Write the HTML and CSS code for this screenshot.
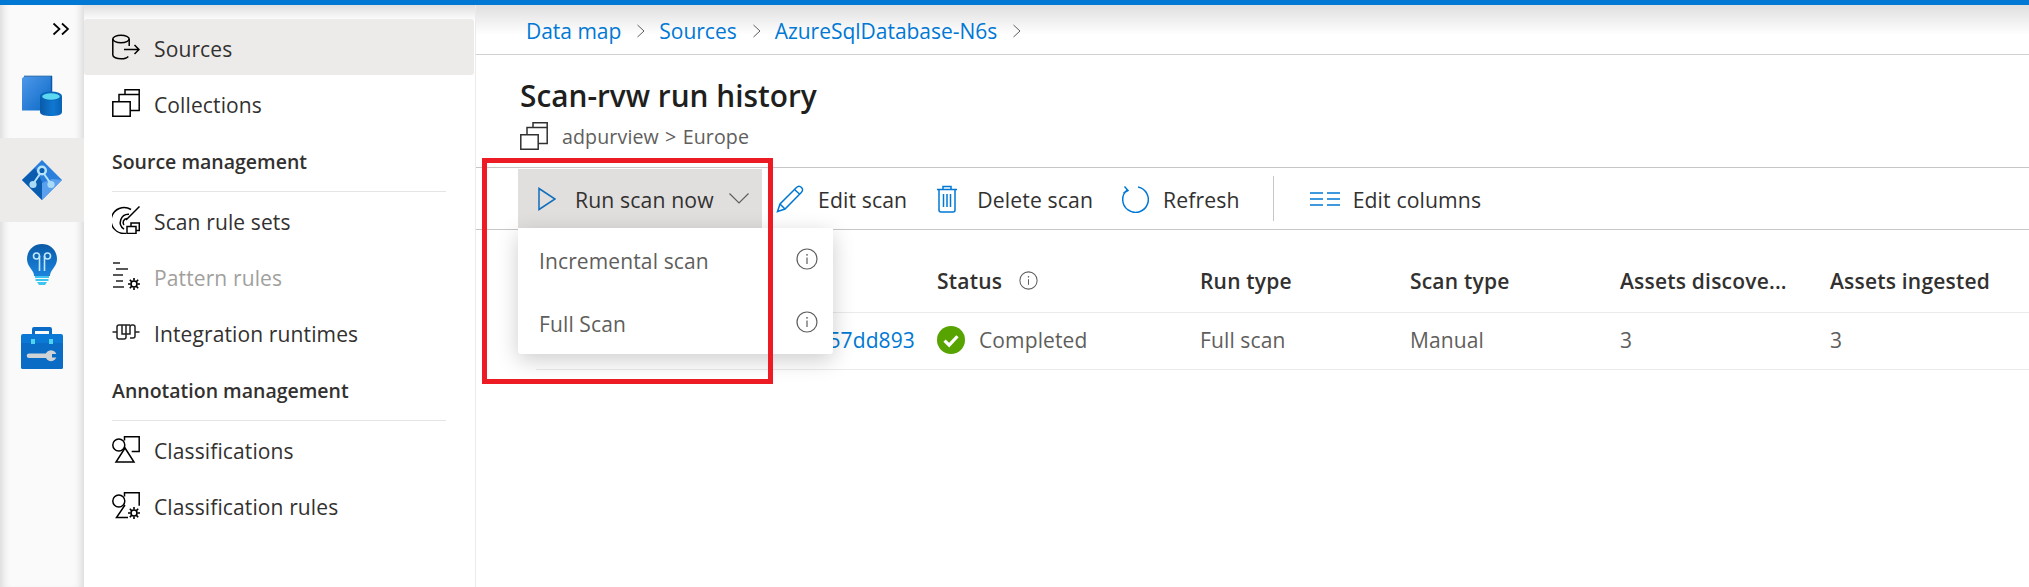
FILE: index.html
```html
<!DOCTYPE html>
<html lang="en">
<head>
<meta charset="utf-8">
<title>Scan-rvw run history</title>
<link rel="stylesheet" href="styles.css">
</head>
<body>
<svg class="defs" width="0" height="0" aria-hidden="true">
  <defs>
    <symbol id="i-collections" viewBox="0 0 28 28">
      <path d="M.8 12.800h17.400v14.400H.8zM7 12.800V5.500h20.200v16H18.200M13 5.500V.8h14.200v4.700" fill="none" stroke="currentColor" stroke-width="1.500"/>
    </symbol>
    <symbol id="i-info" viewBox="0 0 22 22">
      <circle cx="11" cy="11" r="10" fill="none" stroke="currentColor" stroke-width="1.200"/>
      <path d="M11 9.500V16" stroke="currentColor" stroke-width="1.200"/>
      <circle cx="11" cy="6.800" r=".9" fill="currentColor"/>
    </symbol>
    <symbol id="i-gear" viewBox="0 0 12 12">
      <circle cx="6" cy="6" r="3" fill="none" stroke="currentColor" stroke-width="1.600"/>
      <path d="M6 0v2.500M6 9.500V12M0 6h2.500M9.500 6H12M1.800 1.800l1.800 1.800M8.400 8.400l1.800 1.800M10.200 1.800 8.400 3.600M3.600 8.400l-1.800 1.800" stroke="currentColor" stroke-width="1.600"/>
    </symbol>
    <linearGradient id="g-blue" x1="0" y1="0" x2="1" y2="1">
      <stop offset="0" stop-color="#4d98ea"/><stop offset="1" stop-color="#0a68c4"/>
    </linearGradient>
    <linearGradient id="g-cyl" x1="0" y1="0" x2="1" y2="0">
      <stop offset="0" stop-color="#0a5aa8"/><stop offset=".6" stop-color="#0f78d2"/><stop offset="1" stop-color="#0a62b4"/>
    </linearGradient>
    <linearGradient id="g-bulb" x1="0" y1="0" x2="0" y2="1">
      <stop offset="0" stop-color="#0a5aa6"/><stop offset="1" stop-color="#1b84dd"/>
    </linearGradient>
  </defs>
</svg>

<div class="topbar"></div>
<div class="app">
  <aside class="rail">
    <div class="rail-toggle">
      <svg width="18" height="14" viewBox="0 0 18 14"><path d="M1.500 1.500 7.500 7l-6 5.500M10 1.500 16 7l-6 5.500" fill="none" stroke="#000" stroke-width="1.700"/></svg>
    </div>
    <div class="rail-item">
      <svg width="42" height="42" viewBox="0 0 42 42">
        <path d="M3 1.500h28v34H1V3.500z" fill="url(#g-blue)"/>
        <path d="M30.500 1v24" stroke="#0a5aa8" stroke-width="1.500" fill="none"/>
        <path d="M3 1.200h28" stroke="#0a5aa8" stroke-width="1"/>
        <path d="M19 21v16c0 3 5 4 11 4s11-1 11-4V21z" fill="url(#g-cyl)"/>
        <ellipse cx="30" cy="21" rx="11" ry="4.500" fill="#0a66bb"/>
        <ellipse cx="30" cy="21.500" rx="8.800" ry="3.200" fill="#5cd8f0"/>
      </svg>
    </div>
    <div class="rail-item rail-item-active">
      <svg width="42" height="42" viewBox="0 0 42 42">
        <path d="M21 1 41 21 21 41 1 21z" fill="#2a7fdc"/>
        <path d="M21 41 1 21 14 9l8 16z" fill="#0a5cae"/>
        <path d="M21 41V24l10-4 10 1z" fill="#5aa0ee"/>
        <path d="M21 12 12 25M21 12l9 13" stroke="#b6e3f8" stroke-width="2" fill="none"/>
        <circle cx="21" cy="11.500" r="3.800" fill="#0a5cae" stroke="#b6e3f8" stroke-width="2.500"/>
        <circle cx="12" cy="25.500" r="3.600" fill="#a8dcf6"/>
        <circle cx="30" cy="25.500" r="3.600" fill="#a8dcf6"/>
      </svg>
    </div>
    <div class="rail-item">
      <svg width="30" height="42" viewBox="0 0 30 42">
        <path d="M15 1C7 1 0 7 0 16c0 6 4 9 6 13 1 2 1 3 1 4h16c0-1 0-2 1-4 2-4 6-7 6-13C30 7 23 1 15 1z" fill="url(#g-bulb)"/>
        <path d="M8 33h14v2H8zM8.500 36h13v2h-13z" fill="#3fc6ef"/>
        <path d="M10 39h10l-2 3h-6z" fill="#3fc6ef"/>
        <g fill="none" stroke="#bfe8fa" stroke-width="1.600">
          <circle cx="9.500" cy="13" r="3"/><circle cx="20.500" cy="13" r="3"/>
          <path d="M12.500 13v15M17.500 13v15"/>
        </g>
      </svg>
    </div>
    <div class="rail-item">
      <svg width="42" height="42" viewBox="0 0 42 42">
        <path d="M11 9V2a2 2 0 0 1 2-2h16a2 2 0 0 1 2 2v7h-3V4H14v5z" fill="#0a6cc7"/>
        <path d="M2 7h38a2 2 0 0 1 2 2v31a2 2 0 0 1-2 2H2a2 2 0 0 1-2-2V9a2 2 0 0 1 2-2z" fill="#0a78d4"/>
        <path d="M0 16h42v24a2 2 0 0 1-2 2H2a2 2 0 0 1-2-2z" fill="#0a6cc4"/>
        <path d="M10 12h4v5h-4zM28 12h4v5h-4z" fill="#50d4ee"/>
        <path d="M8 26.500h20v4.500H8a1.500 1.500 0 0 1 0-4.500z" fill="#cfd3d6"/>
        <circle cx="30" cy="28.700" r="5.500" fill="#cfd3d6"/>
        <path d="M31 27h5v3.500h-5z" fill="#0a6cc4"/>
      </svg>
    </div>
  </aside>

  <nav class="nav">
    <a class="nav-item nav-item-active">
      <svg class="nav-icon" viewBox="0 0 28 28"><g fill="none" stroke="#000" stroke-width="1.500"><ellipse cx="9" cy="6" rx="8.200" ry="3.800"/><path d="M.8 6v16c0 2.300 4 3.800 8.200 3.800 3 0 6-.8 7.300-2.300M17.200 6v7M12 16.500h15M22.500 12 27 16.500 22.500 21"/></g></svg>
      <span>Sources</span>
    </a>
    <a class="nav-item"><svg class="nav-icon"><use href="#i-collections"/></svg><span>Collections</span></a>

    <h3 class="nav-heading">Source management</h3>
    <a class="nav-item">
      <svg class="nav-icon" viewBox="0 0 28 28"><g fill="none" stroke="#000" stroke-width="1.500"><path d="M27.500.5 14 14M19 3.500a13 13 0 1 0-6 24h1"/><path d="M17 8.200a8.200 8.200 0 0 0-5 15"/><path d="M15 12.500a4 4 0 0 0-3 6.500"/><path d="M15 20.500h9v7h-9zM19 20.500V17h8.300v7.500H24"/></g></svg>
      <span>Scan rule sets</span>
    </a>
    <a class="nav-item nav-item-disabled">
      <svg class="nav-icon" viewBox="0 0 28 28"><g fill="none" stroke="#222" stroke-width="1.500"><path d="M1 1h7M4 7h12M1 13h10M4 19h7M1 25h11"/></g><use href="#i-gear" x="16" y="16" width="12" height="12" color="#000"/></svg>
      <span>Pattern rules</span>
    </a>
    <a class="nav-item">
      <svg class="nav-icon" viewBox="0 0 28 28"><path d="M.5 14H5M23 14h4.500M5 9a2 2 0 0 1 2-2h7v12a2 2 0 0 1-2 2H7a2 2 0 0 1-2-2zM10 7v9h8V9a2 2 0 0 1 2-2h1a2 2 0 0 1 2 2v9a2 2 0 0 1-2 2h-3M14 7h4" fill="none" stroke="#222" stroke-width="1.500"/></svg>
      <span>Integration runtimes</span>
    </a>

    <h3 class="nav-heading">Annotation management</h3>
    <a class="nav-item">
      <svg class="nav-icon" viewBox="0 0 28 28"><g fill="none" stroke="#000" stroke-width="1.500"><circle cx="6.800" cy="10" r="6"/><path d="M12.500 5.500V1.800H27.200v14.700h-7.500M13 13 22 27H4z"/></g></svg>
      <span>Classifications</span>
    </a>
    <a class="nav-item">
      <svg class="nav-icon" viewBox="0 0 28 28"><g fill="none" stroke="#000" stroke-width="1.500"><circle cx="6.800" cy="10" r="6"/><path d="M12.500 5.500V1.800H27.200v13M13 14 4.500 26.500H16"/></g><use href="#i-gear" x="16" y="16" width="12" height="12" color="#000"/></svg>
      <span>Classification rules</span>
    </a>
  </nav>

  <main class="main">
    <div class="crumbs">
      <a class="crumb">Data map</a><svg class="crumb-sep" viewBox="0 0 10 14"><path d="M1.500 1 8 7l-6.500 6" fill="none" stroke="#605e5c" stroke-width="1"/></svg>
      <a class="crumb">Sources</a><svg class="crumb-sep" viewBox="0 0 10 14"><path d="M1.500 1 8 7l-6.500 6" fill="none" stroke="#605e5c" stroke-width="1"/></svg>
      <a class="crumb">AzureSqlDatabase-N6s</a><svg class="crumb-sep" viewBox="0 0 10 14"><path d="M1.500 1 8 7l-6.500 6" fill="none" stroke="#605e5c" stroke-width="1"/></svg>
    </div>

    <header class="page-head">
      <h1 class="title">Scan-rvw run history</h1>
      <div class="subtitle">
        <svg class="sub-icon"><use href="#i-collections"/></svg>
        <span>adpurview &gt; Europe</span>
      </div>
    </header>

    <div class="toolbar">
      <div class="run-wrap">
        <button class="tool tool-run">
          <svg class="run-play" viewBox="0 0 18 24"><path d="M1 1.500 17 12 1 22.500z" fill="none" stroke="#106ebe" stroke-width="1.500"/></svg>
          <span>Run scan now</span>
          <svg class="run-caret" viewBox="0 0 20 11"><path d="M.5.500 10 10 19.500.5" fill="none" stroke="#605e5c" stroke-width="1.200"/></svg>
        </button>
        <div class="menu">
          <div class="menu-item"><span>Incremental scan</span><svg class="menu-info"><use href="#i-info"/></svg></div>
          <div class="menu-item"><span>Full Scan</span><svg class="menu-info"><use href="#i-info"/></svg></div>
        </div>
      </div>
      <button class="tool tool-edit">
        <svg class="tool-icon" viewBox="0 0 28 28"><path d="M1.500 26.500 4 19 20.500 2.500c1.500-1.500 3.500-1.500 5 0s1.300 3.500-.2 5L9 24zM4 19l5 5M18.500 4.500l5.500 5" fill="none" stroke="#0078d4" stroke-width="1.500"/></svg>
        <span>Edit scan</span>
      </button>
      <button class="tool tool-delete">
        <svg class="tool-icon-del" viewBox="0 0 22 28"><path d="M1 4.500h20M7 4.500V1.500h8v3M3 4.500V25a2 2 0 0 0 2 2h12a2 2 0 0 0 2-2V4.500M7.500 9v13M11 9v13M14.500 9v13" fill="none" stroke="#0078d4" stroke-width="1.500"/></svg>
        <span>Delete scan</span>
      </button>
      <button class="tool tool-refresh">
        <svg class="tool-icon" viewBox="0 0 28 28"><path d="M17 2a12.800 12.800 0 1 1-11 3M3.500 1.500 7 5.500 2.500 8" fill="none" stroke="#0078d4" stroke-width="1.500"/></svg>
        <span>Refresh</span>
      </button>
      <span class="tool-divider"></span>
      <button class="tool tool-cols">
        <svg class="tool-icon-cols" viewBox="0 0 30 16"><path d="M0 2h13M17 2h13M0 8h13M17 8h13M0 14h13M17 14h13" fill="none" stroke="#0078d4" stroke-width="1.500"/></svg>
        <span>Edit columns</span>
      </button>
    </div>

    <div class="table">
      <div class="row row-head">
        <div class="cell"></div>
        <div class="cell"><span>Status</span><svg class="head-info"><use href="#i-info"/></svg></div>
        <div class="cell">Run type</div>
        <div class="cell">Scan type</div>
        <div class="cell">Assets discove...</div>
        <div class="cell">Assets ingested</div>
      </div>
      <div class="row row-body">
        <div class="cell cell-id"><a class="link">4f1c57dd893</a></div>
        <div class="cell">
          <svg class="status-icon" viewBox="0 0 26 26"><circle cx="13" cy="13" r="13" fill="#57a300"/><path d="M7 13.500l4.300 4.300L19 9.500" fill="none" stroke="#fff" stroke-width="3"/></svg>
          <span>Completed</span>
        </div>
        <div class="cell">Full scan</div>
        <div class="cell">Manual</div>
        <div class="cell">3</div>
        <div class="cell">3</div>
      </div>
    </div>
  </main>
</div>
<div class="callout"></div>
</body>
</html>
```
FILE: styles.css
```css
* { box-sizing: border-box; }
html, body { height: 100%; }
body {
  margin: 0;
  overflow: hidden;
  position: relative;
  display: flex;
  flex-direction: column;
  background: #fff;
  color: #323130;
  font-family: "Open Sans", "Noto Sans", sans-serif;
  font-size: 21px;
  letter-spacing: 0.12px;
}
.defs { position: absolute; }
.topbar { height: 5px; flex: none; background: #0078d4; }
.app { flex: 1; display: flex; min-height: 0; }

/* Left rail */
.rail {
  flex: none;
  width: 84px;
  background: #fafafa;
  box-shadow: inset 9px 0 9px -7px #d4d4d4, inset -9px 0 9px -7px #d4d4d4;
}
.rail-toggle {
  height: 49px;
  display: flex;
  justify-content: flex-end;
  align-items: center;
  padding: 0 14px 1px 0;
}
.rail-item { height: 84px; display: flex; align-items: center; justify-content: center; }
.rail-item-active { background: #edebe9; }

/* Nav */
.nav {
  flex: none;
  width: 392px;
  padding-top: 14px;
  border-right: 1px solid #edebe9;
  background: linear-gradient(#dfdfdf, #fff 16px) no-repeat;
}
.nav-item {
  display: flex;
  align-items: center;
  gap: 15px;
  height: 56px;
  padding-left: 28px;
  margin-right: 1px;
  border-radius: 3px;
}
.nav-item span { padding-top: 3px; margin-left: -1px; }
.nav-item-active { background: #edebe9; }
.nav-item-disabled { color: #a19f9d; }
.nav-icon { flex: none; width: 28px; height: 28px; color: #000; }
.nav-heading {
  margin: 0 0 0 28px;
  width: 334px;
  height: 61px;
  padding-top: 16px;
  border-bottom: 1px solid #e5e5e5;
  font-size: 19.5px;
  line-height: 30px;
  letter-spacing: 0;
  font-weight: 600;
  color: #323130;
}

/* Main */
.main { flex: 1; min-width: 0; display: flex; flex-direction: column; position: relative; }
.crumbs {
  height: 50px;
  flex: none;
  display: flex;
  align-items: center;
  padding: 2px 0 0 50px;
  border-bottom: 1px solid #d2d0ce;
  background: linear-gradient(#dfdfdf, #fff 30px);
  letter-spacing: -0.02px;
}
.crumb { color: #0078d4; }
.crumb-sep { width: 10px; height: 14px; margin: 0 13px 0 15px; flex: none; }
.page-head { height: 112px; flex: none; padding: 20px 0 0 44px; }
.title { margin: 0; font-size: 29.8px; line-height: 42px; font-weight: 600; color: #201f1e; letter-spacing: 0; }
.subtitle { display: flex; align-items: center; gap: 14px; height: 28px; margin-top: 5px; color: #605e5c; font-size: 19.6px; word-spacing: 1px; }
.subtitle span { padding-top: 1px; }
.sub-icon { width: 28px; height: 28px; color: #323130; }

.toolbar {
  height: 63px;
  flex: none;
  display: flex;
  align-items: center;
  padding-left: 42px;
  border-top: 1px solid #c8c6c4;
  border-bottom: 1px solid #c8c6c4;
  font-size: 21.2px;
}
.run-wrap { position: relative; height: 59px; }
.tool {
  display: flex;
  align-items: center;
  height: 59px;
  padding: 0;
  border: 0;
  background: none;
  font: inherit;
  letter-spacing: inherit;
  color: #323130;
}
.tool span { padding-top: 2px; }
.tool-run { width: 244px; padding-left: 20px; background: #e1dfdd; }
.run-play { width: 18px; height: 24px; margin-right: 19px; }
.run-caret { width: 20px; height: 11px; margin-left: 15px; }
.tool-edit { margin-left: 14px; }
.tool-delete { margin-left: 29px; }
.tool-refresh { margin-left: 28px; }
.tool-cols { margin-left: 36px; }
.tool-icon { width: 28px; height: 28px; margin-right: 14px; }
.tool-icon-del { width: 22px; height: 28px; margin-right: 19px; }
.tool-icon-cols { width: 30px; height: 16px; margin-right: 13px; }
.tool-divider { width: 1px; height: 45px; margin-left: 33px; background: #c8c6c4; }

.menu {
  position: absolute;
  top: 59px;
  left: 0;
  z-index: 2;
  width: 315px;
  height: 126px;
  background: #fff;
  border-radius: 0 0 3px 3px;
  box-shadow: 0 6px 22px rgba(0, 0, 0, .2);
  padding-top: 1px;
  color: #605e5c;
  font-size: 21px;
}
.menu-item {
  height: 63px;
  display: flex;
  align-items: center;
  justify-content: space-between;
  padding: 0 15px 0 21px;
}
.menu-info { width: 22px; height: 22px; margin-top: -4px; color: #605e5c; }

/* Table */
.table { padding-left: 60px; }
.row { display: grid; grid-template-columns: 401px 263px 210px 210px 210px 199px; }
.cell { display: flex; align-items: center; white-space: nowrap; }
.row-head { height: 83px; align-items: end; border-bottom: 1px solid #edebe9; font-weight: 600; padding-bottom: 17px; letter-spacing: 0.2px; }
.row-body { height: 57px; padding-bottom: 2px; border-bottom: 1px solid #edebe9; color: #605e5c; }
.cell-id { justify-content: flex-end; padding-right: 22px; }
.link { color: #0078d4; }
.head-info { width: 19px; height: 19px; margin: 0 0 2px 17px; color: #605e5c; }
.status-icon { width: 28px; height: 28px; margin-right: 14px; flex: none; }

/* Red annotation box drawn on top of the screenshot */
.callout {
  position: absolute;
  left: 482px;
  top: 158px;
  width: 291px;
  height: 226px;
  border: 5px solid #ed1c24;
  z-index: 5;
}
```
